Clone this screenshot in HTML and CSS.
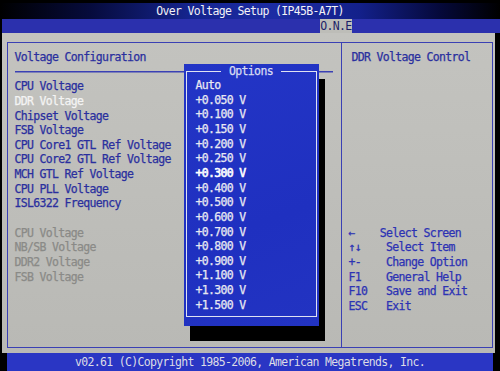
FILE: index.html
```html
<!DOCTYPE html>
<html lang="en">
<head>
    <meta charset="UTF-8">
    <title>Over Voltage Setup</title>
    <link rel="stylesheet" href="styles.css">
</head>
<body>
    <div class="screen">
        <header class="title"><span>Over Voltage Setup (IP45B-A7T)</span></header>

        <nav class="tabs"><span class="tab">O.N.E</span></nav>

        <main class="panel">
            <div class="frame">
                <section class="settings">
                    <h1>Voltage Configuration</h1>
                    <div class="rule"></div>
                    <ul class="items">
                        <li>CPU Voltage</li>
                        <li class="selected">DDR Voltage</li>
                        <li>Chipset Voltage</li>
                        <li>FSB Voltage</li>
                        <li>CPU Core1 GTL Ref Voltage</li>
                        <li>CPU Core2 GTL Ref Voltage</li>
                        <li>MCH GTL Ref Voltage</li>
                        <li>CPU PLL Voltage</li>
                        <li>ISL6322 Frequency</li>
                        <li class="blank"></li>
                        <li class="info">CPU Voltage</li>
                        <li class="info">NB/SB Voltage</li>
                        <li class="info">DDR2 Voltage</li>
                        <li class="info">FSB Voltage</li>
                    </ul>

                    <div class="popup">
                        <div class="popup-border">
                            <span class="popup-title">Options</span>
                        </div>
                        <ul class="options">
                            <li>Auto</li>
                            <li>+0.050 V</li>
                            <li>+0.100 V</li>
                            <li>+0.150 V</li>
                            <li>+0.200 V</li>
                            <li>+0.250 V</li>
                            <li class="current">+0.300 V</li>
                            <li>+0.400 V</li>
                            <li>+0.500 V</li>
                            <li>+0.600 V</li>
                            <li>+0.700 V</li>
                            <li>+0.800 V</li>
                            <li>+0.900 V</li>
                            <li>+1.100 V</li>
                            <li>+1.300 V</li>
                            <li>+1.500 V</li>
                        </ul>
                    </div>
                </section>

                <aside class="help">
                    <h2>DDR Voltage Control</h2>
                    <ul class="keys">
                        <li><span class="key wide">←</span>Select Screen</li>
                        <li><span class="key">↑↓</span>Select Item</li>
                        <li><span class="key">+-</span>Change Option</li>
                        <li><span class="key">F1</span>General Help</li>
                        <li><span class="key">F10</span>Save and Exit</li>
                        <li><span class="key">ESC</span>Exit</li>
                    </ul>
                </aside>
            </div>
        </main>

        <footer class="footer">v02.61 (C)Copyright 1985-2006, American Megatrends, Inc.</footer>
    </div>
</body>
</html>
```

FILE: styles.css
```css
body {
    margin: 0;
    background-color: #000;
    font-family: "DejaVu Sans Mono", "Liberation Mono", monospace;
    font-size: 11.5px;
    letter-spacing: -0.67px;
}
.screen {
    --row: 14.65px;
    width: 500px;
    height: 371px;
    overflow: hidden;
    display: flex;
    flex-direction: column;
}
ul {
    list-style: none;
    margin: 0;
    padding: 0;
}
li {
    height: var(--row);
    line-height: var(--row);
    white-space: pre;
}

/* top title */
.title {
    height: 15px;
    padding-top: 4px;
    line-height: 15px;
    text-align: center;
    color: #f2f2f6;
    background: linear-gradient(180deg, #000 0, #000 3px, transparent 3px),
        linear-gradient(90deg, #000 0%, #060b3c 18%, #15248e 38%, #1c2ca4 55%, #13208a 72%, #05093a 88%, #000 100%);
}

.tabs {
    height: 14px;
    margin-left: 2px;
    background-color: #2b30ad;
    display: flex;
    padding-left: 318px;
}
.tab {
    width: 32px;
    line-height: 15px;
    text-align: center;
    background-color: #bdbdb8;
    color: #1c1f68;
}

/* gray body */
.panel {
    height: 311px;
    margin: 0 5px 0 2px;
    padding: 9px 2px 0 5px;
    background: linear-gradient(180deg, #c3c3bf 0%, #bdbdb9 60%, #b9b9b5 100%);
}
.frame {
    height: 304px;
    border: 1.5px solid #3a40b4;
    display: flex;
}
.settings {
    position: relative;
    width: 326px;
    padding: 7px 0 0 6.5px;
    color: #2a2f9e;
    -webkit-text-stroke: 0.25px currentColor;
}
.settings h1 {
    margin: 0;
    font-size: 11.5px;
    font-weight: normal;
    height: var(--row);
    line-height: var(--row);
}
.rule {
    height: var(--row);
    margin-right: 8px;
    background: linear-gradient(#3a40b4, #3a40b4) center / 100% 1.5px no-repeat;
}
.items .selected {
    color: #f4f4f4;
}
.items .info {
    color: #8a8a87;
}

/* options popup */
.popup {
    position: absolute;
    left: 175.5px;
    top: 20.5px;
    width: 135px;
    height: 262px;
    background: linear-gradient(160deg, #2335c6 0%, #1f30c0 60%, #2233c2 100%);
    box-shadow: 6px 15px 0 #000;
    color: #e9e9f2;
}
.popup-border {
    position: absolute;
    left: 2px;
    right: 2px;
    top: 7px;
    bottom: 9px;
    border: 1px solid #dfe2f2;
    text-align: center;
}
.popup-title {
    position: relative;
    top: -8px;
    padding: 0 8px;
    line-height: 15px;
    background-color: #2234c5;
    color: #d8dcf2;
}
.options {
    position: relative;
    padding: 14.6px 0 0 12px;
}
.options .current {
    color: #fff;
    -webkit-text-stroke: 0.6px #fff;
}

/* right help column */
.help {
    flex: 1;
    border-left: 1.5px solid #3a40b4;
    padding: 7px 0 0 7px;
    color: #2a2f9e;
    -webkit-text-stroke: 0.25px currentColor;
    display: flex;
    flex-direction: column;
}
.help h2 {
    margin: 0 0 0 3px;
    font-size: 11.5px;
    font-weight: normal;
    height: var(--row);
    line-height: var(--row);
}
.keys {
    margin-top: calc(var(--row) * 11);
    color: #2c32b4;
}
.key {
    display: inline-block;
    width: 37.5px;
}
.key.wide {
    width: 31.25px;
}

.footer {
    height: 18px;
    margin: 0 7px;
    line-height: 18px;
    text-align: center;
    color: #dcdce6;
    background-color: #2a36c4;
}
```
